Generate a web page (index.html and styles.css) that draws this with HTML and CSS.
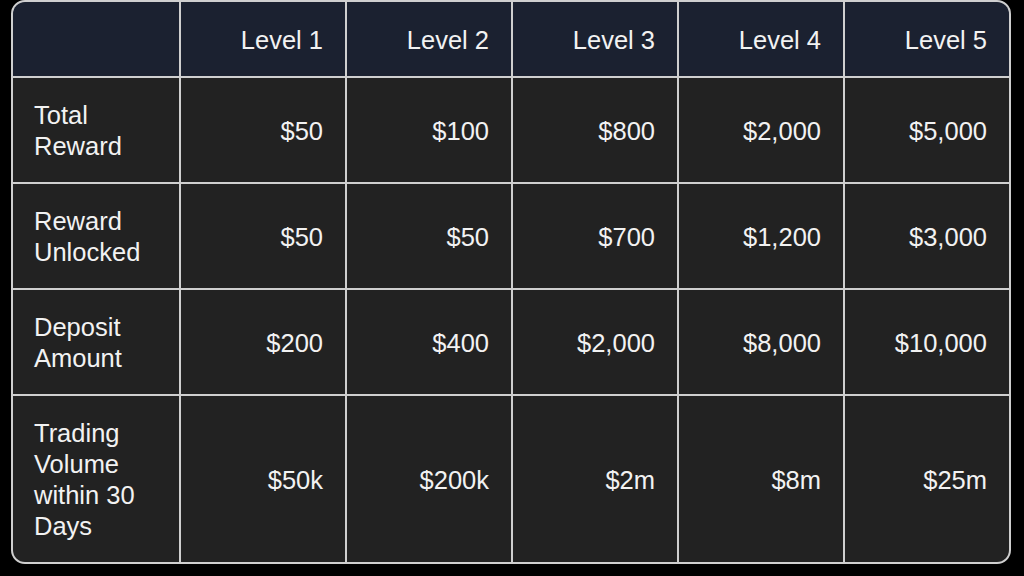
FILE: index.html
```html
<!DOCTYPE html>
<html lang="en">
<head>
<meta charset="utf-8">
<title>Reward Levels</title>
<link rel="stylesheet" href="styles.css">
</head>
<body>
<div class="table" role="table">
  <div class="cell head corner" role="columnheader"></div>
  <div class="cell head num" role="columnheader">Level 1</div>
  <div class="cell head num" role="columnheader">Level 2</div>
  <div class="cell head num" role="columnheader">Level 3</div>
  <div class="cell head num" role="columnheader">Level 4</div>
  <div class="cell head num" role="columnheader">Level 5</div>

  <div class="cell label" role="rowheader">Total Reward</div>
  <div class="cell num">$50</div>
  <div class="cell num">$100</div>
  <div class="cell num">$800</div>
  <div class="cell num">$2,000</div>
  <div class="cell num">$5,000</div>

  <div class="cell label" role="rowheader">Reward Unlocked</div>
  <div class="cell num">$50</div>
  <div class="cell num">$50</div>
  <div class="cell num">$700</div>
  <div class="cell num">$1,200</div>
  <div class="cell num">$3,000</div>

  <div class="cell label" role="rowheader">Deposit Amount</div>
  <div class="cell num">$200</div>
  <div class="cell num">$400</div>
  <div class="cell num">$2,000</div>
  <div class="cell num">$8,000</div>
  <div class="cell num">$10,000</div>

  <div class="cell label" role="rowheader">Trading Volume within 30 Days</div>
  <div class="cell num">$50k</div>
  <div class="cell num">$200k</div>
  <div class="cell num">$2m</div>
  <div class="cell num">$8m</div>
  <div class="cell num">$25m</div>
</div>
</body>
</html>
```
FILE: styles.css
```css
html, body {
  margin: 0;
  background: #000;
}
body {
  padding: 0 13px 0 11px;
  font-family: "Liberation Sans", Arial, Helvetica, sans-serif;
}
.table {
  width: 996px;
  display: grid;
  grid-template-columns: 166px repeat(5, 164px);
  gap: 2px;
  background: #cfcfcf;
  border: 2px solid #cfcfcf;
  border-radius: 14px;
  overflow: hidden;
}
.cell {
  background: #222222;
  color: #f2f2f2;
  font-size: 25.5px;
  line-height: 31px;
  padding: 22px 22px 20px;
  display: flex;
  align-items: center;
}
.cell.head {
  background: #1b2130;
  padding-top: 23px;
  padding-bottom: 20px;
}
.cell.num {
  justify-content: flex-end;
}
.cell.label {
  padding-left: 21px;
  padding-right: 18px;
}
```
